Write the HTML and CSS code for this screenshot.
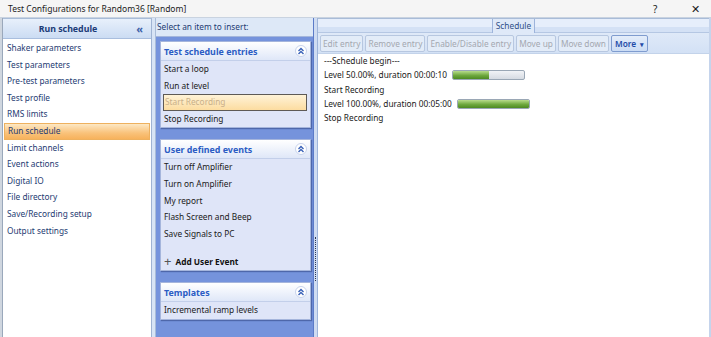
FILE: index.html
```html
<!DOCTYPE html>
<html>
<head>
<meta charset="utf-8">
<link rel="stylesheet" href="styles.css">
</head>
<body>
<div class="window">
  <div class="titlebar">
    <span class="title">Test Configurations for Random36 [Random]</span>
    <span class="tb-help">?</span>
    <span class="tb-close">✕</span>
  </div>
  <div class="main">
    <div class="edge"></div>
    <div class="leftpanel">
      <div class="lp-header"><span>Run schedule</span><span class="collapse">«</span></div>
      <ul class="navlist">
        <li>Shaker parameters</li>
        <li>Test parameters</li>
        <li>Pre-test parameters</li>
        <li>Test profile</li>
        <li>RMS limits</li>
        <li class="sel">Run schedule</li>
        <li>Limit channels</li>
        <li>Event actions</li>
        <li>Digital IO</li>
        <li>File directory</li>
        <li>Save/Recording setup</li>
        <li>Output settings</li>
      </ul>
    </div>
    <div class="split1"></div>
    <div class="midpanel">
      <div class="mid-caption">Select an item to insert:</div>
      <div class="groups">
        <div class="group">
          <div class="g-header"><span>Test schedule entries</span><span class="g-btn"><svg width="10" height="10" viewBox="0 0 10 10"><path d="M2.5 5 L5 2.5 L7.5 5 M2.5 8 L5 5.5 L7.5 8" fill="none" stroke="#3a62b8" stroke-width="1.4"/></svg></span></div>
          <div class="g-item">Start a loop</div>
          <div class="g-item">Run at level</div>
          <div class="g-item g-sel">Start Recording</div>
          <div class="g-item">Stop Recording</div>
        </div>
        <div class="group">
          <div class="g-header"><span>User defined events</span><span class="g-btn"><svg width="10" height="10" viewBox="0 0 10 10"><path d="M2.5 5 L5 2.5 L7.5 5 M2.5 8 L5 5.5 L7.5 8" fill="none" stroke="#3a62b8" stroke-width="1.4"/></svg></span></div>
          <div class="g-item">Turn off Amplifier</div>
          <div class="g-item">Turn on Amplifier</div>
          <div class="g-item">My report</div>
          <div class="g-item">Flash Screen and Beep</div>
          <div class="g-item">Save Signals to PC</div>
          <div class="g-add"><span class="plus">+</span>Add User Event</div>
        </div>
        <div class="group">
          <div class="g-header"><span>Templates</span><span class="g-btn"><svg width="10" height="10" viewBox="0 0 10 10"><path d="M2.5 5 L5 2.5 L7.5 5 M2.5 8 L5 5.5 L7.5 8" fill="none" stroke="#3a62b8" stroke-width="1.4"/></svg></span></div>
          <div class="g-item">Incremental ramp levels</div>
        </div>
      </div>
    </div>
    <div class="split2"><div class="grip"></div></div>
    <div class="rightpanel">
      <div class="tabstrip"><span class="tab">Schedule</span></div>
      <div class="toolbar">
        <span class="btn">Edit entry</span>
        <span class="btn">Remove entry</span>
        <span class="btn">Enable/Disable entry</span>
        <span class="btn">Move up</span>
        <span class="btn">Move down</span>
        <span class="btn more">More <span class="caret">▾</span></span>
      </div>
      <div class="schedule">
        <div class="row">---Schedule begin---</div>
        <div class="row">Level 50.00%, duration 00:00:10 <span class="bar"><span class="fill" style="width:50%"></span></span></div>
        <div class="row">Start Recording</div>
        <div class="row">Level 100.00%, duration 00:05:00 <span class="bar"><span class="fill" style="width:100%"></span></span></div>
        <div class="row">Stop Recording</div>
      </div>
    </div>
  </div>
</div>
</body>
</html>
```
FILE: styles.css
```css
* { box-sizing: border-box; }
html, body { margin: 0; padding: 0; }
body {
  width: 711px;
  height: 337px;
  overflow: hidden;
  font-family: "Noto Sans", "Open Sans", sans-serif;
  font-size: 8.3px;
  color: #1a1a1a;
  background: #ffffff;
}
.window { width: 711px; height: 337px; display: flex; flex-direction: column; }
.titlebar {
  height: 18px;
  display: flex;
  align-items: center;
  background: #f5f5f5;
  border-bottom: 1px solid #c9d3e0;
  padding-left: 8px;
  font-size: 8.5px;
  color: #1a1a1a;
}
.title { flex: 1; }
.tb-help { width: 38px; font-size: 10px; }
.tb-close { width: 20px; font-size: 11px; }
.main { flex: 1; display: flex; background: #dce7f6; min-height: 0; }
.edge { width: 3px; background: #cfd6df; border-right: 1px solid #9aa8bb; }
.leftpanel {
  width: 149px;
  display: flex;
  flex-direction: column;
  background: #ffffff;
  border-right: 1px solid #9fb3d3;
  border-top: 1px solid #a8bcd8;
}
.lp-header {
  height: 20px;
  display: flex;
  align-items: center;
  justify-content: center;
  position: relative;
  padding-right: 18px;
  background: linear-gradient(#e8f0fb, #cbdcf3);
  border-bottom: 1px solid #a9bede;
  font-weight: bold;
  color: #1c3c78;
  font-size: 8.8px;
}
.collapse { position: absolute; right: 8px; top: 2px; font-size: 11px; color: #3a5ea8; }
.navlist { list-style: none; margin: 0; padding: 1px 0 0 0; }
.navlist li {
  height: 16.6px;
  line-height: 16.6px;
  padding-left: 3px;
  margin: 0 1px;
  color: #1e3b72;
  white-space: nowrap;
}
.navlist li.sel {
  background: linear-gradient(#fde8c4, #f9c27a 60%, #f7b25c);
  border: 1px solid #eeb15f;
  line-height: 14.6px;
}
.split1 { width: 3px; background: #d8e4f5; }
.midpanel {
  width: 158px;
  display: flex;
  flex-direction: column;
  border-left: 1px solid #a9bcd8;
}
.mid-caption {
  height: 18px;
  line-height: 18px;
  padding-left: 1px;
  background: #dde8f7;
  color: #1e3b72;
}
.groups {
  flex: 1;
  background: #7593dc;
  border-top: 1px solid #a4b6dc;
  padding: 4px 2px 0 4px;
  display: flex;
  flex-direction: column;
  gap: 11px;
}
.group {
  background: #dfe5f8;
  border: 1px solid #a5b5dc;
  box-shadow: 1px 1px 1px rgba(40,60,120,0.5);
}
.g-header {
  height: 19px;
  display: flex;
  align-items: center;
  justify-content: space-between;
  padding: 0 3px 0 3px;
  background: linear-gradient(#ffffff, #dfe7f8);
  border-bottom: 1px solid #c3cfea;
  font-weight: bold;
  color: #2b5cc4;
  font-size: 8.9px;
}
.g-btn {
  width: 12px; height: 12px;
  border-radius: 50%;
  background: #ffffff;
  border: 1px solid #c8d3ec;
  display: flex; align-items: center; justify-content: center;
}
.g-item {
  height: 16.6px;
  line-height: 16.6px;
  padding-left: 3px;
  color: #202020;
  white-space: nowrap;
}
.g-item.g-sel {
  margin: 0 3px 0 2px;
  padding-left: 1px;
  background: linear-gradient(#fff3d8, #fcdca0);
  border: 1px solid #5e5a56;
  line-height: 14.6px;
  color: #c9b08a;
}
.g-add {
  margin-top: 11px;
  height: 17px;
  line-height: 17px;
  padding-left: 3px;
  font-weight: bold;
  color: #111;
}
.plus { font-weight: normal; font-size: 13px; color: #555; margin-right: 4px; vertical-align: -1px; }
.split2 {
  width: 5px;
  background: #cfdcf2;
  border-left: 1px solid #5c7bc8;
  border-right: 1px solid #9fb5da;
  display: flex;
  align-items: center;
  justify-content: center;
  padding-top: 162px;
}
.grip { width: 1px; height: 44px; border-left: 1px dotted #2b3550; }
.rightpanel {
  flex: 1;
  display: flex;
  flex-direction: column;
  background: #ffffff;
  border-right: 2px solid #c5d4ec;
}
.tabstrip {
  height: 15px;
  background: linear-gradient(#e6eefb 0, #e6eefb 60%, #d4e1f5 60%);
  border-top: 1px solid #a9bcd8;
  border-bottom: 1px solid #b5c7e3;
  display: flex;
  justify-content: center;
}
.tab {
  height: 15px;
  line-height: 13px;
  padding: 0 3px;
  background: #dfe9f8;
  border: 1px solid #9db4db;
  border-top: none;
  color: #2f4f88;
}
.toolbar {
  height: 21px;
  display: flex;
  align-items: center;
  gap: 2px;
  padding-left: 2px;
  background: linear-gradient(#dfe9f8, #d3e1f5);
  border-bottom: 1px solid #c3d3ea;
}
.btn {
  height: 17px;
  line-height: 15px;
  padding: 0 2px;
  border: 1px solid #b7c7e0;
  border-radius: 2px;
  background: #e3ecf8;
  color: #a3a8b0;
  white-space: nowrap;
}
.btn.more {
  color: #1f4ca8;
  font-weight: 600;
  border-color: #7f9ccf;
  background: linear-gradient(#e4edfa, #cbdcf4);
  padding: 0 3px;
}
.caret { font-size: 7px; color: #1f4ca8; margin-left: 2px; }
.schedule { padding: 0 0 0 6px; }
.row {
  height: 14.3px;
  line-height: 14.3px;
  color: #1a1a1a;
  display: flex;
  align-items: center;
  white-space: nowrap;
}
.bar {
  display: inline-block;
  width: 73px;
  height: 10px;
  margin-left: 5px;
  border: 1px solid #9aa7b5;
  border-radius: 2px;
  background: linear-gradient(#f1f3f6, #d6dbe2);
  overflow: hidden;
}
.fill {
  display: block;
  height: 100%;
  background: linear-gradient(#b8dc8c, #6ea83e 55%, #4d8a22);
}
```
